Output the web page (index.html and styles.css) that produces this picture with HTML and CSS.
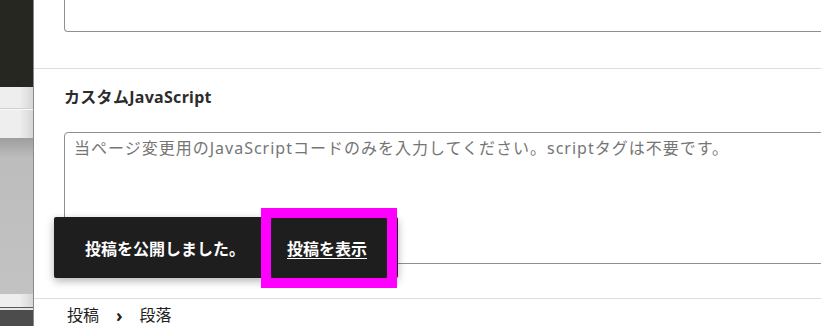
FILE: index.html
```html
<!DOCTYPE html>
<html lang="ja">
<head>
    <meta charset="UTF-8">
    <meta name="viewport" content="width=device-width, initial-scale=1.0">
    <title>カスタムJavaScript</title>
    <link rel="stylesheet" href="styles.css">
</head>
<body>

    <div class="layout">
        <aside class="backdrop">
            <div class="bd-dark"></div>
            <div class="bd-light"><div class="bd-line"></div></div>
            <div class="bd-gray"></div>
            <div class="bd-light bd-short"></div>
            <div class="bd-bottom"></div>
        </aside>

        <main class="editor">
            <section class="panel panel-top">
                <div class="field-tail"></div>
            </section>

            <section class="panel">
                <h3 class="panel-title">カスタムJavaScript</h3>
                <textarea class="code-input" placeholder="当ページ変更用のJavaScriptコードのみを入力してください。scriptタグは不要です。"></textarea>
            </section>

            <nav class="breadcrumb">
                <span>投稿</span>
                <span class="sep">›</span>
                <span>段落</span>
            </nav>

            <div class="snackbar">
                <span class="snackbar-text">投稿を公開しました。</span>
                <a href="#" class="snackbar-action">投稿を表示</a>
            </div>
        </main>
    </div>

</body>
</html>
```

FILE: styles.css
```css
* {
    margin: 0;
    padding: 0;
    box-sizing: border-box;
    font-family: 'Noto Sans', 'Noto Sans CJK JP', sans-serif;
}

body {
    background: white;
    height: 100vh;
    overflow: hidden;
}

.layout {
    display: flex;
    height: 100vh;
}

/* dimmed area on the left */
.backdrop {
    width: 34px;
    flex-shrink: 0;
    display: flex;
    flex-direction: column;
    border-right: 1px solid #8a8a8a;
}

.bd-dark {
    height: 87px;
    background: #272722;
}

.bd-light {
    height: 51px;
    background: linear-gradient(to right, #eeeeee 60%, #d6d6d6);
    padding-top: 21px;
}

.bd-line {
    height: 2px;
    border-top: 1px solid #cfcfcf;
    background: #fafafa;
}

.bd-gray {
    flex: 1;
    background: linear-gradient(to bottom, #9e9e9e, #bdbdbd 20px, #c2c2c2);
}

.bd-short {
    flex: 0 0 14px;
    height: 14px;
    padding: 0;
    border-bottom: 1px solid #5a5a5a;
}

.bd-bottom {
    height: 18px;
    border-top: 2px solid #e6e6e6;
    background: #4c4c4c;
}

.editor {
    flex: 1;
    position: relative;
    overflow: hidden;
}

.panel {
    padding: 18px 0 34px 30px;
    border-bottom: 1px solid #dddddd;
}

.panel-top {
    padding-top: 0;
    padding-bottom: 36px;
}

.field-tail {
    width: 820px;
    height: 32px;
    border: 1px solid #8c8f94;
    border-top: none;
    border-radius: 0 0 4px 4px;
}

.panel-title {
    font-size: 16px;
    font-weight: 700;
    line-height: 20px;
    letter-spacing: 0.3px;
    color: #2c2c2c;
    margin-bottom: 25px;
}

.code-input {
    display: block;
    width: 820px;
    height: 132px;
    border: 1px solid #8c8f94;
    border-radius: 4px;
    padding: 3px 9px;
    font-size: 16px;
    line-height: 24px;
    letter-spacing: 1px;
    color: #1e1e1e;
    resize: none;
    outline: none;
}

.code-input::placeholder {
    color: #757575;
}

.breadcrumb {
    display: flex;
    align-items: center;
    gap: 17px;
    padding: 4px 0 0 33px;
    font-size: 16px;
    line-height: 24px;
    color: #1e1e1e;
}

.breadcrumb .sep {
    font-weight: 700;
    font-size: 18px;
}

.snackbar {
    position: absolute;
    left: 20px;
    top: 217px;
    width: 344px;
    height: 61px;
    display: flex;
    align-items: center;
    padding-left: 31px;
    background: #1e1e1e;
    border-radius: 2px;
    box-shadow: 0 3px 8px rgba(0, 0, 0, 0.3);
}

.snackbar-text {
    color: white;
    font-size: 16px;
    font-weight: 700;
    width: 186px;
}

.snackbar-action {
    height: 60px;
    display: flex;
    align-items: center;
    padding: 0 20px 0 16px;
    color: white;
    font-size: 16px;
    font-weight: 700;
    text-decoration: underline;
    text-underline-offset: 3px;
    outline: 10px solid #ff00ff;
}
```
